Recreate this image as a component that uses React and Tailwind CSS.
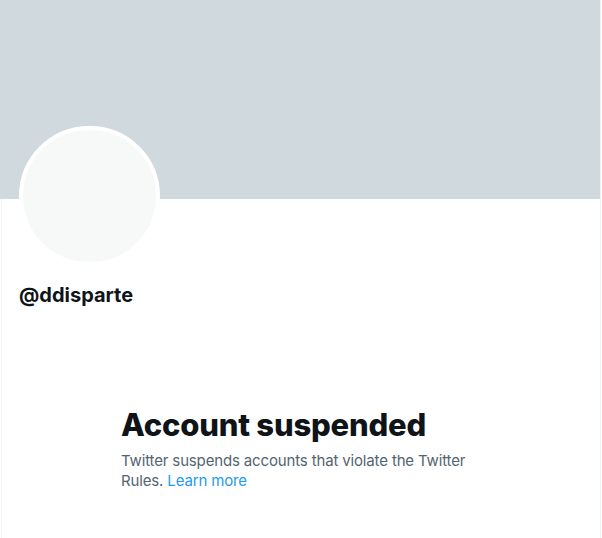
import React from 'react';

function App() {
  return (
    <div className="w-[602px] h-[538px] bg-white overflow-hidden" style={{ fontFamily: 'Inter, "Noto Sans", sans-serif' }}>
      <div className="w-[601px] h-full border-r border-[#eff3f4] flex flex-col">
        <div className="h-[199px] bg-[#cfd9de] shrink-0"></div>
        <div className="flex-1 ml-px border-l border-[#eff3f4] px-[17px]">
          <div className="-mt-[73px] w-[141px] h-[140px] rounded-full border-4 border-white bg-[#f7f9f9]"></div>
          <div className="mt-[17px] text-[20px] leading-6 font-bold text-[#0f1419]">@ddisparte</div>
          <div className="mt-[100px] max-w-[400px] mx-auto px-5">
            <h1 className="text-[31px] leading-9 font-extrabold text-[#0f1419] tracking-[-0.2px]">Account suspended</h1>
            <p className="mt-2 text-[15px] leading-5 text-[#536471] tracking-[-0.15px]">
              Twitter suspends accounts that violate the Twitter Rules.{' '}
              <a href="#" className="text-[#1d9bf0]">Learn more</a>
            </p>
          </div>
        </div>
      </div>
    </div>
  );
}

export default App;
